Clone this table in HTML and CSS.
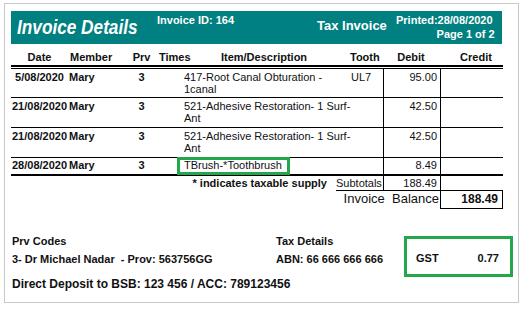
FILE: index.html
```html
<!DOCTYPE html>
<html>
<head>
<meta charset="utf-8">
<link rel="stylesheet" href="styles.css">
</head>
<body>
<div class="frame">
  <div class="banner">
    <div class="title"><span class="title-text">Invoice Details</span></div>
    <div class="inv-id">Invoice ID: 164</div>
    <div class="tax">Tax Invoice</div>
    <div class="printed"><div class="pr-line">Printed:28/08/2020</div><div>Page 1 of 2</div></div>
  </div>

  <div class="grid head">
    <div class="c-date">Date</div>
    <div class="c-member">Member</div>
    <div class="c-prv">Prv</div>
    <div class="c-times">Times</div>
    <div class="c-item h-item">Item/Description</div>
    <div class="c-tooth">Tooth</div>
    <div class="c-debit h-debit">Debit</div>
    <div class="c-credit h-credit">Credit</div>
  </div>

  <div class="body">
    <div class="grid row r1">
      <div class="c-date b">5/08/2020</div>
      <div class="c-member b">Mary</div>
      <div class="c-prv b">3</div>
      <div class="c-times"></div>
      <div class="c-item">417-Root Canal Obturation -<br>1canal</div>
      <div class="c-tooth">UL7</div>
      <div class="c-debit">95.00</div>
      <div class="c-credit"></div>
    </div>
    <div class="grid row r2">
      <div class="c-date b">21/08/2020</div>
      <div class="c-member b">Mary</div>
      <div class="c-prv b">3</div>
      <div class="c-times"></div>
      <div class="c-item">521-Adhesive Restoration- 1 Surf-<br>Ant</div>
      <div class="c-tooth"></div>
      <div class="c-debit">42.50</div>
      <div class="c-credit"></div>
    </div>
    <div class="grid row r2">
      <div class="c-date b">21/08/2020</div>
      <div class="c-member b">Mary</div>
      <div class="c-prv b">3</div>
      <div class="c-times"></div>
      <div class="c-item">521-Adhesive Restoration- 1 Surf-<br>Ant</div>
      <div class="c-tooth"></div>
      <div class="c-debit">42.50</div>
      <div class="c-credit"></div>
    </div>
    <div class="grid row r4">
      <div class="c-date b">28/08/2020</div>
      <div class="c-member b">Mary</div>
      <div class="c-prv b">3</div>
      <div class="c-times"></div>
      <div class="c-item hl-cell">TBrush-*Toothbrush<span class="hl-box"></span></div>
      <div class="c-tooth"></div>
      <div class="c-debit">8.49</div>
      <div class="c-credit"></div>
    </div>
  </div>

  <div class="summary">
    <div class="note">* indicates taxable supply</div>
    <div class="subt">Subtotals</div>
    <div class="s-debit">188.49</div>
    <div class="s-credit"></div>
    <div class="bal-label">Invoice&nbsp; Balance</div>
    <div class="bal-box">188.49</div>
  </div>

  <div class="footer">
    <div class="f-left">
      <div>Prv Codes</div>
      <div>3- Dr Michael Nadar&nbsp; - Prov: 563756GG</div>
    </div>
    <div class="f-mid">
      <div>Tax Details</div>
      <div>ABN: 66 666 666 666</div>
    </div>
    <div class="gst">
      <span>GST</span>
      <span>0.77</span>
    </div>
  </div>
  <div class="deposit">Direct Deposit to BSB: 123 456 / ACC: 789123456</div>
</div>
</body>
</html>
```
FILE: styles.css
```css
* { box-sizing: border-box; }
html, body { margin: 0; padding: 0; background: #fff; }
body {
  font-family: "Liberation Sans", Arial, sans-serif;
  font-size: 11px;
  color: #111;
}
.frame {
  margin: 3px 0 0 4px;
  width: 515px;
  height: 300px;
  border: 1px solid #c8c8c8;
  padding: 7px 0 0 6px;
}
.banner {
  width: 491px;
  height: 33px;
  background: #008080;
  color: #fff;
  display: grid;
  grid-template-columns: 146px 160px 79px 1fr;
  align-items: start;
  font-weight: bold;
}
.title {
  font-size: 21px;
  font-style: italic;
  line-height: 22px;
  padding: 5px 0 0 6px;
  white-space: nowrap;
}
.title-text {
  display: inline-block;
  transform: scaleX(0.82);
  transform-origin: left center;
}
.inv-id { font-size: 11px; line-height: 13px; padding-top: 3px; }
.tax { font-size: 13px; line-height: 15px; padding-top: 7px; }
.printed {
  font-size: 11px;
  line-height: 14px;
  padding: 2px 9px 0 0;
  text-align: right;
}
.pr-line { padding-right: 2px; }

.grid {
  display: grid;
  width: 492px;
  grid-template-columns: 57px 60px 27px 25px 168px 35px 58px 62px;
}
.head {
  font-weight: bold;
  height: 23px;
  padding-top: 6px;
  line-height: 14px;
  border-bottom: 2px solid #000;
}
.head .c-date, .head .c-prv, .head .h-item, .head .h-debit, .head .h-credit { text-align: center; }
.head .c-member { padding-left: 2px; }
.head .c-times { padding-left: 4px; white-space: nowrap; }
.head .c-tooth { padding-left: 2px; }
.head .h-item { padding-left: 0; }
.head .h-debit { padding-right: 2px; }
.head .h-credit { padding-left: 8px; }

.body {
  width: 492px;
  margin-top: 1px;
  border-top: 1px solid #000;
}
.row {
  line-height: 12px;
  border-bottom: 1px solid #000;
}
.row > div { padding-top: 2px; }
.r1 { height: 29px; }
.r2 { height: 30px; }
.r4 { height: 18px; border-bottom: 2px solid #000; }
.r4 > div { padding-top: 1px; }
.b { font-weight: bold; }
.row .c-date { text-align: center; }
.row .c-member { padding-left: 1px; }
.row .c-prv { text-align: center; }
.row .c-item { padding-left: 4px; white-space: nowrap; }
.row .c-tooth { padding-left: 3px; }
.row .c-debit {
  border-left: 1px solid #000;
  border-right: 1px solid #000;
  text-align: right;
  padding-right: 3px;
}
.hl-cell { position: relative; }
.hl-box {
  position: absolute;
  left: -3px;
  top: -1px;
  width: 113px;
  height: 18px;
  border: 3px solid #22a84a;
}

.summary {
  display: grid;
  width: 492px;
  grid-template-columns: 325px 47px 58px 62px;
  grid-template-rows: 15px 18px;
}
.note {
  font-weight: bold;
  text-align: right;
  padding: 1px 9px 0 0;
  line-height: 13px;
}
.subt { border-bottom: 1px solid #000; line-height: 13px; padding-top: 1px; }
.s-debit {
  border-left: 1px solid #000;
  border-right: 1px solid #000;
  border-bottom: 1px solid #000;
  text-align: right;
  padding: 1px 3px 0 0;
  line-height: 13px;
}
.s-credit { border-bottom: 1px solid #000; }
.bal-label {
  grid-column: 2 / 4;
  font-size: 13px;
  line-height: 15px;
  text-align: right;
  padding: 0 2px 0 0;
  white-space: nowrap;
}
.bal-box {
  border: 1px solid #000;
  border-top: none;
  margin-left: -1px;
  font-weight: bold;
  font-size: 12px;
  line-height: 15px;
  text-align: right;
  padding: 1px 4px 0 0;
}

.footer {
  display: flex;
  align-items: flex-start;
  margin-top: 23px;
  font-weight: bold;
  line-height: 18px;
}
.f-left { width: 265px; padding-left: 1px; }
.f-mid { width: 128px; }
.gst {
  margin-top: 4px;
  width: 109px;
  height: 41px;
  border: 3px solid #22a84a;
  display: flex;
  justify-content: space-between;
  align-items: center;
  padding: 3px 11px 0 9px;
  font-size: 11px;
}
.deposit {
  font-weight: bold;
  font-size: 12px;
  line-height: 14px;
  padding-left: 1px;
}
```
